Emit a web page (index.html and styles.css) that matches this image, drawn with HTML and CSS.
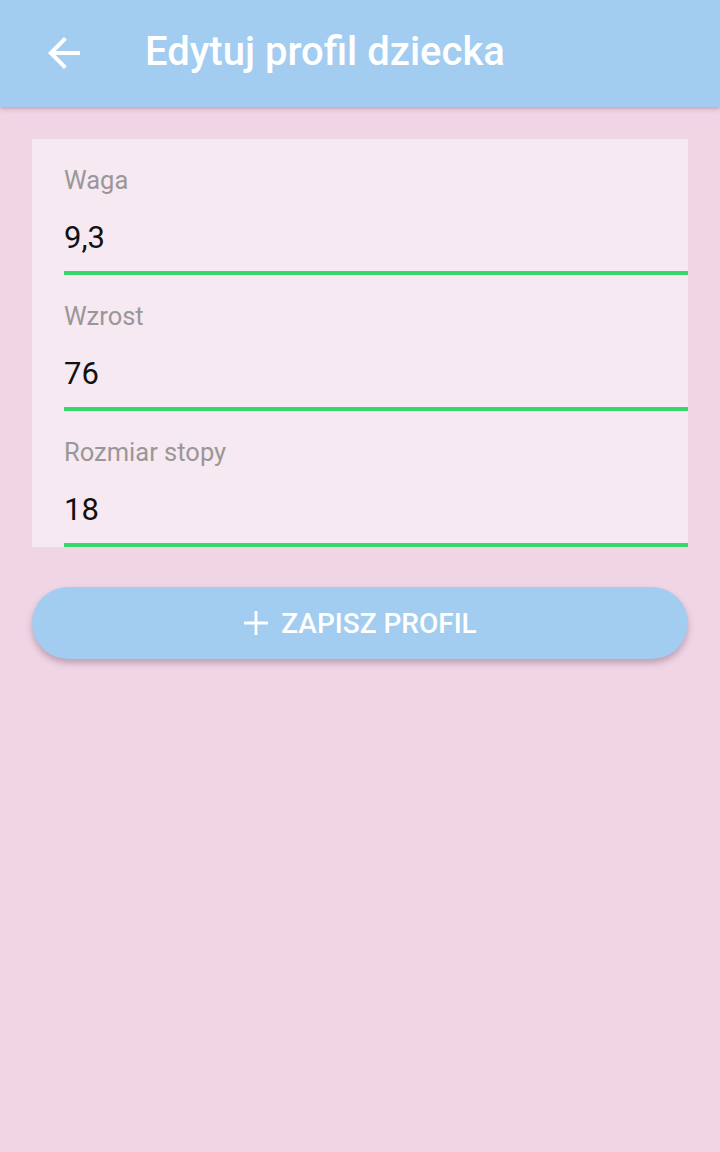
FILE: index.html
```html
<!DOCTYPE html>
<html lang="pl">
<head>
<meta charset="utf-8">
<link rel="stylesheet" href="styles.css">
</head>
<body>
<header class="appbar">
  <button class="back" aria-label="Wstecz">
    <svg viewBox="0 0 24 24" width="48" height="48"><path d="M20 11H7.83l5.59-5.59L12 4l-8 8 8 8 1.41-1.41L7.83 13H20v-2z" fill="#fff"/></svg>
  </button>
  <h1 class="title">Edytuj profil dziecka</h1>
</header>
<main class="content">
  <section class="card">
    <div class="field">
      <label class="label">Waga</label>
      <div class="value">9,3</div>
    </div>
    <div class="field">
      <label class="label">Wzrost</label>
      <div class="value">76</div>
    </div>
    <div class="field">
      <label class="label">Rozmiar stopy</label>
      <div class="value">18</div>
    </div>
  </section>
  <button class="save">
    <svg viewBox="0 0 24 24" width="26" height="26"><path d="M12 1v22M1 12h22" stroke="#fff" stroke-width="2.6" fill="none"/></svg>
    <span>ZAPISZ PROFIL</span>
  </button>
</main>
</body>
</html>
```
FILE: styles.css
```css
html, body {
  margin: 0;
  padding: 0;
}
body {
  background: #f0d5e5;
  font-family: Roboto, "Noto Sans", sans-serif;
  min-height: 1152px;
}
.appbar {
  height: 107px;
  background: #a2cdf0;
  display: flex;
  align-items: center;
  box-shadow: 0 2px 4px rgba(120, 60, 90, 0.35);
  position: relative;
}
.back {
  width: 48px;
  height: 48px;
  margin-left: 40px;
  padding: 0;
  border: 0;
  background: none;
  display: flex;
  margin-top: -2px;
}
.title {
  margin: 0 0 0 57px;
  color: #fff;
  font-weight: 500;
  font-size: 40px;
  letter-spacing: 0;
  margin-top: -4px;
}
.content {
  padding: 32px 32px;
}
.card {
  background: #f6e9f2;
  padding-left: 32px;
}
.field {
  height: 136px;
  box-sizing: border-box;
  border-bottom: 4px solid #34d96a;
  display: flex;
  flex-direction: column;
}
.label {
  color: #9b9698;
  font-size: 25.5px;
  margin-top: 27px;
  line-height: 28px;
}
.value {
  color: #111;
  font-size: 31px;
  margin-top: 26px;
  line-height: 36px;
}
.save {
  margin-top: 40px;
  width: 100%;
  height: 72px;
  border: 0;
  border-radius: 36px;
  background: #a2cdf0;
  color: #fff;
  font-family: Roboto, sans-serif;
  font-weight: 500;
  font-size: 28px;
  display: flex;
  align-items: center;
  justify-content: center;
  gap: 12px;
  box-shadow: 0 4px 6px rgba(100, 60, 80, 0.35);
}
```
